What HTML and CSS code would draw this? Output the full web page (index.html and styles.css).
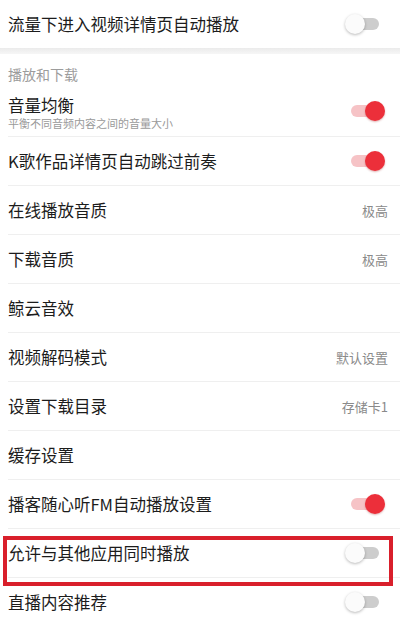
FILE: index.html
```html
<!DOCTYPE html>
<html lang="zh-CN">
<head>
<meta charset="utf-8">
<link rel="stylesheet" href="styles.css">
</head>
<body>
<div class="page">
  <div class="row first">
    <span class="label">流量下进入视频详情页自动播放</span>
    <span class="toggle"><span class="track"></span><span class="knob"></span></span>
  </div>
  <div class="band"></div>
  <div class="section">播放和下载</div>
  <div class="row tall">
    <div class="texts">
      <span class="label">音量均衡</span>
      <span class="sub">平衡不同音频内容之间的音量大小</span>
    </div>
    <span class="toggle on"><span class="track"></span><span class="knob"></span></span>
  </div>
  <div class="row">
    <span class="label">K歌作品详情页自动跳过前奏</span>
    <span class="toggle on"><span class="track"></span><span class="knob"></span></span>
  </div>
  <div class="row">
    <span class="label">在线播放音质</span>
    <span class="value">极高</span>
  </div>
  <div class="row">
    <span class="label">下载音质</span>
    <span class="value">极高</span>
  </div>
  <div class="row">
    <span class="label">鲸云音效</span>
  </div>
  <div class="row">
    <span class="label">视频解码模式</span>
    <span class="value">默认设置</span>
  </div>
  <div class="row">
    <span class="label">设置下载目录</span>
    <span class="value">存储卡1</span>
  </div>
  <div class="row">
    <span class="label">缓存设置</span>
  </div>
  <div class="row">
    <span class="label">播客随心听FM自动播放设置</span>
    <span class="toggle on"><span class="track"></span><span class="knob"></span></span>
  </div>
  <div class="row marked">
    <span class="label">允许与其他应用同时播放</span>
    <span class="toggle"><span class="track"></span><span class="knob"></span></span>
    <span class="highlight"></span>
  </div>
  <div class="row">
    <span class="label">直播内容推荐</span>
    <span class="toggle"><span class="track"></span><span class="knob"></span></span>
  </div>
</div>
</body>
</html>
```

FILE: styles.css
```css
html, body {
  margin: 0;
  padding: 0;
  background: #ffffff;
}
body {
  font-family: "Noto Sans CJK SC", "Noto Sans", sans-serif;
  color: #1c1c1c;
  width: 400px;
  height: 620px;
  overflow: hidden;
}
.page {
  display: flex;
  flex-direction: column;
}
.row {
  position: relative;
  display: flex;
  align-items: center;
  justify-content: space-between;
  height: 48px;
  margin-left: 8px;
  padding-right: 12px;
  border-bottom: 1px solid #efefef;
  flex-shrink: 0;
}
.row.first {
  height: 48px;
  border-bottom: none;
}
.row.tall {
  height: 50px;
  align-items: flex-start;
}
.texts {
  display: flex;
  flex-direction: column;
  padding-top: 8px;
}
.label {
  font-size: 16.5px;
  line-height: 22px;
  white-space: nowrap;
}
.sub {
  font-size: 11px;
  line-height: 14px;
  color: #9a9a9a;
  white-space: nowrap;
}
.tall .toggle {
  margin-top: 15px;
}
.value {
  font-size: 13px;
  color: #8a8a8a;
}
.band {
  height: 6px;
  background: linear-gradient(#ebebeb, #f6f6f6);
  flex-shrink: 0;
}
.section {
  height: 32px;
  padding-top: 10px;
  padding-left: 8px;
  font-size: 14px;
  line-height: 20px;
  color: #9c9c9c;
  box-sizing: border-box;
  flex-shrink: 0;
}
.toggle {
  position: relative;
  width: 40px;
  height: 20px;
  margin-right: 3px;
  flex-shrink: 0;
}
.track {
  position: absolute;
  left: 6px;
  top: 4px;
  width: 28px;
  height: 12px;
  border-radius: 6px;
  background: #cdcdcd;
}
.knob {
  position: absolute;
  left: 0;
  top: 0;
  width: 20px;
  height: 20px;
  border-radius: 50%;
  background: #fbfbfb;
  box-shadow: 0 1px 3px rgba(0, 0, 0, 0.28);
}
.toggle.on .track {
  background: #f6c3c6;
}
.toggle.on .knob {
  left: 20px;
  background: #ec2f3a;
  box-shadow: 0 1px 2px rgba(150, 0, 0, 0.3);
}
.highlight {
  position: absolute;
  left: -5px;
  top: 7px;
  width: 390px;
  height: 50px;
  border: 4px solid #d91f2b;
  box-sizing: border-box;
  pointer-events: none;
}
```
